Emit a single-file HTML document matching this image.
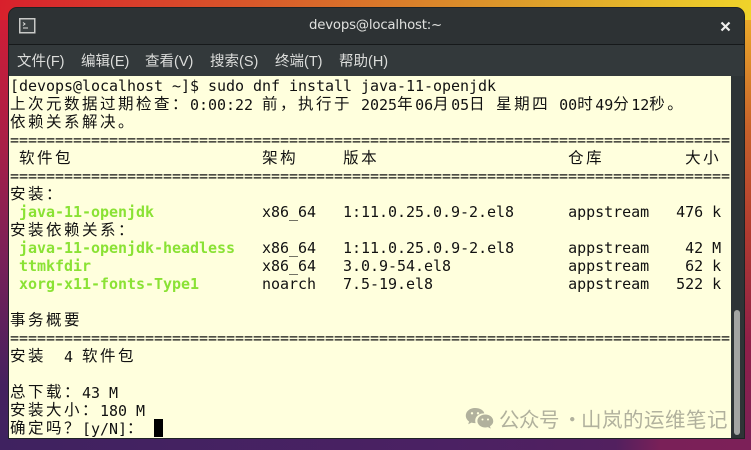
<!DOCTYPE html>
<html lang="zh-CN"><head><meta charset="utf-8"><title>devops@localhost:~</title>
<style>
*{margin:0;padding:0;box-sizing:border-box}
html,body{width:751px;height:450px;overflow:hidden}
body{position:relative;background:linear-gradient(100deg,#d8202c 0%,#d8572a 30%,#dc9a2a 62%,#f6e62a 100%);}
#bgL{position:absolute;left:0;top:20px;width:12px;height:430px;background:linear-gradient(180deg,#cf1d36 0%,#a71f48 30%,#7a2058 55%,#45215f 85%,#3f2260 100%)}
#bgR{position:absolute;right:0;top:20px;width:10px;height:430px;background:linear-gradient(180deg,#eaa82a 0%,#c8622a 25%,#b03a30 50%,#8f1f48 75%,#7a2058 100%)}
#bgB{position:absolute;left:0;top:436px;width:751px;height:14px;background:linear-gradient(90deg,#3f2260 0%,#4b2163 60%,#52205f 82%,#7a2058 88%,#7c2058 100%)}
#win{position:absolute;left:8px;top:7px;width:737px;height:432px;background:#2e3436;border:1px solid #1f2325;border-top-left-radius:9px;border-top-right-radius:9px;overflow:hidden}
#title{position:absolute;left:0;top:0;width:100%;height:37px;background:#2d3234;border-bottom:1px solid #16191a}
#menu{position:absolute;left:0;top:37px;width:100%;height:31px;background:#33393b}
.t{position:absolute;color:#e4e5e3;white-space:nowrap}
#tt{font:13.3px/20px "DejaVu Sans",sans-serif;letter-spacing:-.2px;color:#dfe0de}
.m{font:14.5px/20px "Liberation Sans","Noto Sans CJK SC",sans-serif;color:#dcdddb}
#term{position:absolute;left:9px;top:76px;width:722px;height:362px;background:#ffffdd;overflow:hidden}
.r{position:absolute;left:1px;width:725px;height:18px;margin-top:1px;font:15px/18px "DejaVu Sans Mono",monospace;letter-spacing:-.03px;white-space:pre;color:#111}
.r i{position:relative;top:-1px;font:normal 15.5px/18px "Noto Sans CJK SC",sans-serif;letter-spacing:2.5px}
.r b{color:#8ae234;font-weight:bold}
#cur{position:absolute;left:145px;top:343px;width:9px;height:18px;background:#000}
#sb{position:absolute;left:734px;top:310px;width:6px;height:125px;border-radius:3px;background:#a3a5a3}
.wm{position:absolute;top:405px;font:20.5px/26px "Noto Sans CJK SC",sans-serif;color:#b1b19d;white-space:nowrap}
svg{position:absolute}
</style></head><body>
<div id="bgL"></div><div id="bgR"></div><div id="bgB"></div>
<div id="win"><div id="title"></div><div id="menu"></div></div>
<svg style="left:19px;top:18px" width="17" height="16" viewBox="0 0 17 16"><rect x=".75" y=".75" width="15" height="14" fill="#3a4042" stroke="#c9cac8" stroke-width="1.5"/><path d="M4 4.500l2 1.500-2 1.500M4 10h5" fill="none" stroke="#e0e1df" stroke-width="1"/></svg>
<div class="t" id="tt" style="left:309px;top:16px">devops@localhost:~</div>
<svg style="left:720px;top:21px" width="11" height="11" viewBox="0 0 11 11"><path d="M1.500 1.500l8 8M9.500 1.500l-8 8" stroke="#eeeeec" stroke-width="2.200" fill="none"/></svg>
<div class="t m" style="left:17px;top:52px">文件(F)</div>
<div class="t m" style="left:81px;top:52px">编辑(E)</div>
<div class="t m" style="left:145px;top:52px">查看(V)</div>
<div class="t m" style="left:210px;top:52px">搜索(S)</div>
<div class="t m" style="left:275px;top:52px">终端(T)</div>
<div class="t m" style="left:339px;top:52px">帮助(H)</div>
<div id="term">
<div class="r" style="top:0">[devops@localhost ~]$ sudo dnf install java-11-openjdk</div>
<div class="r" style="top:18px"><i>上次元数据过期检查：</i>0:00:22 <i>前，执行于</i> 2025<i>年</i>06<i>月</i>05<i>日</i> <i>星期四</i> 00<i>时</i>49<i>分</i>12<i>秒。</i></div>
<div class="r" style="top:36px"><i>依赖关系解决。</i></div>
<div class="r" style="top:54px">================================================================================</div>
<div class="r" style="top:72px"> <i>软件包</i>                     <i>架构</i>     <i>版本</i>                     <i>仓库</i>         <i>大小</i></div>
<div class="r" style="top:90px">================================================================================</div>
<div class="r" style="top:108px"><i>安装：</i></div>
<div class="r" style="top:126px"> <b>java-11-openjdk</b>            x86_64   1:11.0.25.0.9-2.el8      appstream   476 k</div>
<div class="r" style="top:144px"><i>安装依赖关系：</i></div>
<div class="r" style="top:162px"> <b>java-11-openjdk-headless</b>   x86_64   1:11.0.25.0.9-2.el8      appstream    42 M</div>
<div class="r" style="top:180px"> <b>ttmkfdir</b>                   x86_64   3.0.9-54.el8             appstream    62 k</div>
<div class="r" style="top:198px"> <b>xorg-x11-fonts-Type1</b>       noarch   7.5-19.el8               appstream   522 k</div>
<div class="r" style="top:234px"><i>事务概要</i></div>
<div class="r" style="top:252px">================================================================================</div>
<div class="r" style="top:270px"><i>安装</i>  4 <i>软件包</i></div>
<div class="r" style="top:306px"><i>总下载：</i>43 M</div>
<div class="r" style="top:324px"><i>安装大小：</i>180 M</div>
<div class="r" style="top:342px"><i>确定吗？</i>[y/N]<i>：</i></div>
<div id="cur"></div>
</div>
<div id="sb"></div>
<svg style="left:465px;top:407px" width="29" height="24" viewBox="0 0 29 24"><path d="M10 1C4.800 1 .8 4.400.8 8.600c0 2.400 1.300 4.500 3.300 5.900L3.200 17.300l3.300-1.700c1.100.3 2.300.5 3.500.5h.6c-.3-.8-.4-1.600-.4-2.400 0-4.200 3.900-7.300 8.500-7.300h.6C18.900 3.300 14.800 1 10 1z" fill="#b1b19d"/><path d="M28.200 14c0-3.600-3.500-6.500-7.900-6.500s-7.900 2.900-7.900 6.500 3.500 6.500 7.900 6.500c.9 0 1.900-.1 2.700-.4l2.700 1.500-.7-2.400c1.900-1.200 3.200-2.900 3.200-4.700z" fill="#b1b19d"/><circle cx="7" cy="6.300" r="1.200" fill="#ffffdd"/><circle cx="13" cy="6.300" r="1.200" fill="#ffffdd"/><circle cx="17.500" cy="12.500" r="1" fill="#ffffdd"/><circle cx="23" cy="12.500" r="1" fill="#ffffdd"/></svg>
<div class="wm" style="left:499px;letter-spacing:-.5px">公众号</div>
<div class="wm" style="left:562px">·</div>
<div class="wm" style="left:581px;letter-spacing:.5px">山岚的运维笔记</div>
</body></html>
